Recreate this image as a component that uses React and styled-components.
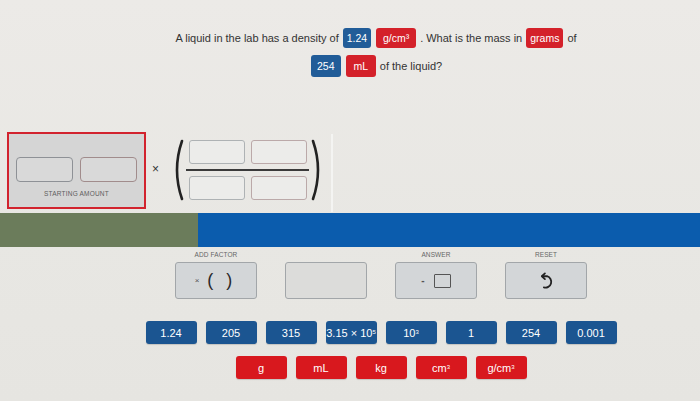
import React from "react";
import styled, { createGlobalStyle } from "styled-components";

const Global = createGlobalStyle`
  html, body { margin: 0; padding: 0; }
  body {
    background: #e9e8e4;
    font-family: "Liberation Sans", Arial, Helvetica, sans-serif;
    color: #2b2b2b;
  }
`;

const Page = styled.div`
  width: 700px;
  height: 401px;
  overflow: hidden;
  display: flex;
  flex-direction: column;
  background: linear-gradient(180deg, #eceae7 0%, #e8e7e3 60%, #e6e5e1 100%);
`;

const Question = styled.div`
  padding: 27px 0 0 52px;
  display: flex;
  flex-direction: column;
  align-items: center;
  gap: 7px;
  font-size: 11px;
  color: #333;
`;

const QLine = styled.div`
  display: flex;
  align-items: center;
  gap: 3px;
  height: 21px;
`;

const Badge = styled.span`
  display: inline-flex;
  align-items: center;
  justify-content: center;
  height: ${(p) => p.$h || 20}px;
  min-width: ${(p) => p.$w || 28}px;
  padding: 0 4px;
  box-sizing: border-box;
  border-radius: 3px;
  color: #fff;
  font-size: 10.5px;
  background: ${(p) => (p.$red ? "#d4212a" : "#215c98")};
  margin: 0 1px;
`;

const Workspace = styled.div`
  margin-top: 56px;
  height: 80px;
  display: flex;
  align-items: flex-start;
`;

const StartBox = styled.div`
  margin: 0 0 0 7px;
  width: 139px;
  height: 77px;
  box-sizing: border-box;
  border: 2px solid #d2232e;
  background: #d5d5d5;
  display: flex;
  flex-direction: column;
  align-items: center;
  padding-top: 23px;
`;

const InputRow = styled.div`
  display: flex;
  gap: 7px;
`;

const SlotInput = styled.div`
  width: 57px;
  height: 25px;
  box-sizing: border-box;
  border: 1px solid ${(p) => (p.$tint ? "#a18c8c" : "#8e9196")};
  border-radius: 4px;
  background: #d9d9d9;
`;

const StartLabel = styled.div`
  margin-top: 8px;
  font-size: 6.5px;
  letter-spacing: 0.2px;
  color: #5d5d5d;
`;

const Times = styled.div`
  margin: 30px 0 0 6px;
  width: 14px;
  font-size: 12px;
  color: #333;
`;

const Paren = styled.svg`
  flex: none;
  margin-top: 7px;
  margin-left: ${(p) => p.$ml || 0}px;
`;

const Fraction = styled.div`
  display: flex;
  flex-direction: column;
  align-items: center;
  margin-top: 8px;
`;

const FracRow = styled.div`
  display: flex;
  gap: 6px;
`;

const FracBox = styled.div`
  width: 56px;
  height: 24px;
  box-sizing: border-box;
  border: 1px solid ${(p) => (p.$tint ? "#bba9a9" : "#aeb2b4")};
  border-radius: 3px;
  background: #ececea;
`;

const FracLine = styled.div`
  width: 123px;
  height: 2px;
  background: #3a3a3a;
  margin: 5px 0 5px;
`;

const Separator = styled.div`
  margin-left: 6px;
  width: 2px;
  height: 78px;
  margin-top: 2px;
  background: #f4f4f2;
`;

const Bar = styled.div`
  height: 34px;
  margin-top: 1px;
  display: flex;
`;

const BarGreen = styled.div`
  width: 198px;
  background: #6b7c5b;
`;

const BarBlue = styled.div`
  flex: 1;
  background: #0b5cad;
`;

const Lower = styled.div`
  padding: 4px 0 0 62px;
  display: flex;
  flex-direction: column;
  align-items: center;
`;

const Controls = styled.div`
  display: flex;
  gap: 28px;
`;

const Control = styled.div`
  display: flex;
  flex-direction: column;
  align-items: center;
  gap: 3px;
`;

const CtrlLabel = styled.div`
  height: 8px;
  font-size: 6.5px;
  color: #666;
  letter-spacing: 0.1px;
`;

const CtrlButton = styled.div`
  width: 82px;
  height: 37px;
  box-sizing: border-box;
  border: 1px solid #a2a6a9;
  border-radius: 3px;
  background: ${(p) => (p.$plain ? "#dcdcda" : "#d3d6d8")};
  display: flex;
  align-items: center;
  justify-content: center;
  gap: 3px;
  color: #333;
`;

const SmallMark = styled.span`
  font-size: ${(p) => p.$size || 8}px;
  font-weight: ${(p) => (p.$bold ? 700 : 400)};
  color: #555;
`;

const BigParen = styled.span`
  font-size: 18px;
  margin: 0 5px;
  color: #2a2a2a;
`;

const AnsBox = styled.span`
  width: 15px;
  height: 12px;
  border: 1px solid #555;
  border-radius: 1px;
  margin-left: 6px;
`;

const TileRow = styled.div`
  display: flex;
  gap: 9px;
  margin-top: ${(p) => p.$mt}px;
`;

const Tile = styled.div`
  width: 51px;
  height: 23px;
  border-radius: 3px;
  background: ${(p) => (p.$red ? "#d8181e" : "#1b5591")};
  color: #fff;
  font-size: 11px;
  display: flex;
  align-items: center;
  justify-content: center;
  box-shadow: 0 1px 1px rgba(0, 0, 0, 0.15);
  sup {
    font-size: 6px;
    line-height: 0;
    position: relative;
    top: -1px;
  }
`;

const LeftParen = () => (
  <Paren $ml={4} width="16" height="62" viewBox="0 0 16 62">
    <path d="M12 2 Q2 31 12 60" fill="none" stroke="#222" strokeWidth="2.6" strokeLinecap="round" />
  </Paren>
);

const RightParen = () => (
  <Paren $ml={0} width="16" height="62" viewBox="0 0 16 62">
    <path d="M4 2 Q14 31 4 60" fill="none" stroke="#222" strokeWidth="2.6" strokeLinecap="round" />
  </Paren>
);

const ResetIcon = () => (
  <svg width="17" height="18" viewBox="0 0 16 17">
    <path d="M4 4 H8.5 A5 5 0 1 1 5.5 14.5" fill="none" stroke="#222" strokeWidth="1.7" strokeLinecap="round" />
    <path d="M6.5 1.3 L3.6 4 L6.5 6.7" fill="none" stroke="#222" strokeWidth="1.7" strokeLinecap="round" strokeLinejoin="round" />
  </svg>
);

const numbers = [
  "1.24",
  "205",
  "315",
  <>3.15 × 10<sup>5</sup></>,
  <>10<sup>3</sup></>,
  "1",
  "254",
  "0.001",
];

const units = ["g", "mL", "kg", <>cm<sup>3</sup></>, <>g/cm<sup>3</sup></>];

export default function App() {
  return (
    <>
      <Global />
      <Page>
        <Question>
          <QLine>
            A liquid in the lab has a density of
            <Badge $w={28}>1.24</Badge>
            <Badge $red $w={40}>
              g/cm³
            </Badge>
            . What is the mass in
            <Badge $red $w={36}>
              grams
            </Badge>
            of
          </QLine>
          <QLine>
            <Badge $w={30} $h={22}>254</Badge>
            <Badge $red $w={30} $h={22}>
              mL
            </Badge>
            of the liquid?
          </QLine>
        </Question>

        <Workspace>
          <StartBox>
            <InputRow>
              <SlotInput />
              <SlotInput $tint />
            </InputRow>
            <StartLabel>STARTING AMOUNT</StartLabel>
          </StartBox>
          <Times>×</Times>
          <LeftParen />
          <Fraction>
            <FracRow>
              <FracBox />
              <FracBox $tint />
            </FracRow>
            <FracLine />
            <FracRow>
              <FracBox />
              <FracBox $tint />
            </FracRow>
          </Fraction>
          <RightParen />
          <Separator />
        </Workspace>

        <Bar>
          <BarGreen />
          <BarBlue />
        </Bar>

        <Lower>
          <Controls>
            <Control>
              <CtrlLabel>ADD FACTOR</CtrlLabel>
              <CtrlButton>
                <SmallMark>×</SmallMark>
                <BigParen>(</BigParen>
                <BigParen>)</BigParen>
              </CtrlButton>
            </Control>
            <Control>
              <CtrlLabel />
              <CtrlButton $plain />
            </Control>
            <Control>
              <CtrlLabel>ANSWER</CtrlLabel>
              <CtrlButton>
                <SmallMark $size={10} $bold>-</SmallMark>
                <AnsBox />
              </CtrlButton>
            </Control>
            <Control>
              <CtrlLabel>RESET</CtrlLabel>
              <CtrlButton>
                <ResetIcon />
              </CtrlButton>
            </Control>
          </Controls>

          <TileRow $mt={22}>
            {numbers.map((n, i) => (
              <Tile key={i}>{n}</Tile>
            ))}
          </TileRow>
          <TileRow $mt={12}>
            {units.map((u, i) => (
              <Tile key={i} $red>
                {u}
              </Tile>
            ))}
          </TileRow>
        </Lower>
      </Page>
    </>
  );
}
